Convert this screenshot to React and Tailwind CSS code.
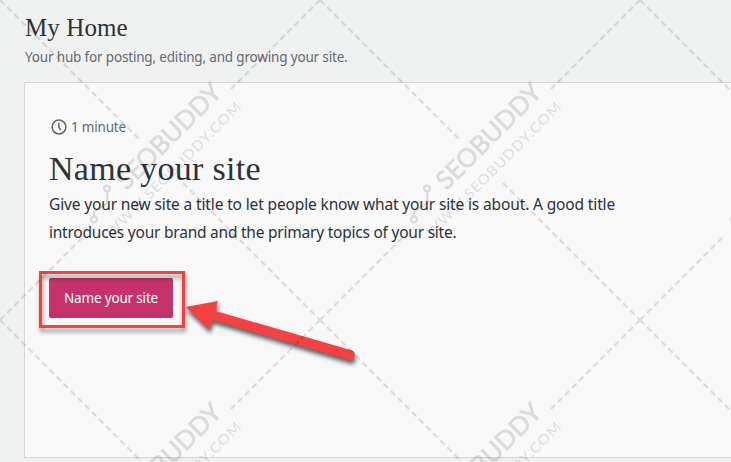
const dash = { stroke: "#000", strokeWidth: 2.1, strokeDasharray: "6.3 3.700", fill: "none" };

function Watermark() {
  return (
    <svg className="pointer-events-none absolute inset-0" width="731" height="462" opacity="0.115">
      <defs>
        <g id="mark">
          <path {...dash} d="M0 0L139 139" />
          <path {...dash} d="M183 183L320 320" />
          <path {...dash} d="M320 0L231 89" />
          <path {...dash} d="M0 320L83 237" />
          <g fill="none" stroke="#000" strokeWidth="2.2">
            <circle cx="107" cy="188.500" r="2.900" />
            <circle cx="94" cy="219.500" r="2.900" />
            <path d="M107.300 192V203.500L94 211.500V216" />
          </g>
          <g transform="translate(126.500 191) rotate(-45)">
            <text x="0" y="0" fontSize="25.500" textLength="137" lengthAdjust="spacingAndGlyphs" stroke="#000" strokeWidth="0.8" className="font-['Lato']">SEOBUDDY</text>
          </g>
          <g transform="translate(112 238) rotate(-45)">
            <text x="0" y="0" fontSize="14" textLength="185" lengthAdjust="spacingAndGlyphs" className="font-['Lato'] tracking-[1px]">WWW.SEOBUDDY.COM</text>
          </g>
        </g>
      </defs>
      {[0, 320].map((y) => [0, 320, 640].map((x) => <use key={`${x}-${y}`} href="#mark" x={x} y={y} />))}
    </svg>
  );
}

function Arrow() {
  return (
    <svg className="pointer-events-none absolute inset-0 drop-shadow-[1px_4px_2px_rgba(0,0,0,0.6)]" width="731" height="462">
      <path d="M185.500 307L218 301L215.500 311L351.500 350.300A5 5 0 0 1 349.500 360L212.500 320L209.500 329.500Z" fill="#f74040" />
    </svg>
  );
}

export default function App() {
  return (
    <div className="relative h-[462px] w-[731px] overflow-hidden bg-[#eff1f1] pl-6 pt-3 font-['Noto_Sans',sans-serif] text-[#2c3338]">
      <header className="h-[70px]">
        <h1 className="h-8 whitespace-nowrap pl-px font-['Liberation_Serif',serif] text-[25px] leading-8 tracking-[0.1px]">My Home</h1>
        <p className="whitespace-nowrap pl-px pt-1 text-[13.5px] leading-[19px] tracking-[-0.17px] text-[#646970]">Your hub for posting, editing, and growing your site.</p>
      </header>
      <section className="h-[376px] w-[760px] border border-[#d5d6d8] bg-[#f8f8f8] pl-6 pt-[34px]">
        <div className="flex h-5 items-center gap-1 pl-0.5 text-[13.5px] tracking-[-0.2px] text-[#646970]">
          <svg width="16" height="16" viewBox="0 0 16 16" fill="none" stroke="currentColor" strokeWidth="1.5">
            <circle cx="8" cy="8" r="6.900" />
            <path d="M7.800 3.800V8l2 3" />
          </svg>
          <span>1 minute</span>
        </div>
        <h2 className="mt-3 h-10 whitespace-nowrap font-['Liberation_Serif',serif] text-[34px] leading-10 tracking-[0.3px]">Name your site</h2>
        <p className="mt-[1px] whitespace-nowrap text-[15.5px] leading-7 tracking-[-0.14px]">
          Give your new site a title to let people know what your site is about. A good title
          <br />
          <span className="tracking-[-0.23px]">introduces your brand and the primary topics of your site.</span>
        </p>
        <button className="mt-8 block h-10 w-[124px] whitespace-nowrap rounded-[2px] bg-[#c5326b] text-[13.5px] tracking-[-0.17px] text-white">Name your site</button>
      </section>
      <div className="absolute left-[39px] top-[271px] h-[57px] w-[146px] border-[3px] border-[#f74040] drop-shadow-[1px_4px_2px_rgba(0,0,0,0.4)]" />
      <Arrow />
      <Watermark />
    </div>
  );
}
